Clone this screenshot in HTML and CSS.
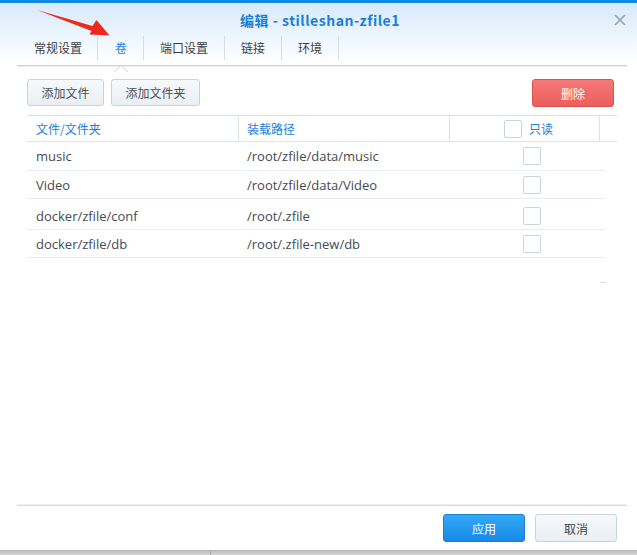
FILE: index.html
```html
<!DOCTYPE html>
<html lang="zh-CN">
<head>
<meta charset="utf-8">
<title>编辑 - stilleshan-zfile1</title>
<link rel="stylesheet" href="styles.css">
</head>
<body>
<div class="dialog">
  <div class="titlebar">
    <span class="title">编辑 - stilleshan-zfile1</span>
    <svg class="close" width="12" height="12" viewBox="0 0 12 12"><path d="M1 1L11 11M11 1L1 11" stroke="#9aa0a6" stroke-width="1.6" fill="none"/></svg>
  </div>
  <div class="tabs">
    <div class="tab">常规设置</div>
    <div class="tab active">卷<svg class="notch" width="14" height="7" viewBox="0 0 14 7"><polyline points="0,7 7,0.5 14,7" fill="#fff" stroke="#d2d2d2" stroke-width="1"/></svg></div>
    <div class="tab">端口设置</div>
    <div class="tab">链接</div>
    <div class="tab">环境</div>
  </div>
  <div class="content">
    <div class="toolbar">
      <button class="btn">添加文件</button>
      <button class="btn wide">添加文件夹</button>
      <button class="btn danger">删除</button>
    </div>
    <div class="grid">
      <div class="ghead">
        <div class="hc c1">文件/文件夹</div>
        <div class="hc c2">装载路径</div>
        <div class="hc c3"><span class="cb hcb"></span><span>只读</span></div>
        <div class="hc c4"></div>
      </div>
      <div class="grow r1"><div class="c1">music</div><div class="c2">/root/zfile/data/music</div><div class="c3"><span class="cb"></span></div></div>
      <div class="grow"><div class="c1">Video</div><div class="c2">/root/zfile/data/Video</div><div class="c3"><span class="cb"></span></div></div>
      <div class="grow r3"><div class="c1">docker/zfile/conf</div><div class="c2">/root/.zfile</div><div class="c3"><span class="cb"></span></div></div>
      <div class="grow"><div class="c1">docker/zfile/db</div><div class="c2">/root/.zfile-new/db</div><div class="c3"><span class="cb"></span></div></div>
      <div class="scrollmark"></div>
    </div>
  </div>
  <div class="footer">
    <button class="btn primary">应用</button>
    <button class="btn cancel">取消</button>
  </div>
  <svg class="arrow" width="120" height="45" viewBox="0 0 120 45"><polygon points="37,10 92.5,26 96.5,20 109.5,35.5 89.5,34.5 91.5,31" fill="#ee2a1c"/></svg>
</div>
<div class="below"><div class="below-left"></div><div class="below-right"></div></div>
</body>
</html>
```
FILE: styles.css
```css
html, body {
  margin: 0;
  padding: 0;
}
body {
  width: 637px;
  height: 555px;
  overflow: hidden;
  background: #d4d4d4;
  font-family: "Open Sans", "Noto Sans CJK SC", sans-serif;
  font-size: 12px;
  color: #444b52;
}
.dialog {
  position: relative;
  box-sizing: border-box;
  height: 550px;
  border-top: 3px solid #0f88e6;
  background: linear-gradient(to bottom, #d7eafa 0px, #eaf4fd 30px, #ffffff 60px);
  display: flex;
  flex-direction: column;
}
.titlebar {
  position: relative;
  height: 33px;
  display: flex;
  align-items: center;
  justify-content: center;
}
.title {
  font-family: "Noto Sans CJK SC", "Open Sans", sans-serif;
  font-size: 14px;
  font-weight: bold;
  color: #1a7fd6;
  letter-spacing: 0.5px;
  margin-left: 3px;
}
.close {
  position: absolute;
  right: 11px;
  top: 11px;
}
.tabs {
  position: relative;
  display: flex;
  height: 29px;
  margin: 0 10px 0 17px;
  padding-left: 1px;
  border-bottom: 1px solid #d3d3d3;
  box-shadow: 0 1px 0 #ececec;
}
.tab {
  position: relative;
  height: 24px;
  line-height: 24px;
  padding: 0 16px;
  border-right: 1px solid #d5dde5;
  font-family: "Noto Sans CJK SC", sans-serif;
  color: #3a3f45;
}
.tab:first-child {
  padding-left: 16px;
  padding-right: 15px;
}
.tab.active {
  color: #1a80d8;
  padding-left: 17px;
}
.notch {
  position: absolute;
  left: 50%;
  margin-left: -7px;
  bottom: -12px;
}
.content {
  padding: 13px 0 0 27px;
}
.toolbar {
  display: flex;
  height: 27px;
  width: 587px;
}
.btn {
  box-sizing: border-box;
  height: 27px;
  width: 77px;
  padding: 0;
  border: 1px solid #c7d2dc;
  border-radius: 3px;
  background: linear-gradient(to bottom, #f7f9fb, #e9eff4);
  font-family: "Noto Sans CJK SC", sans-serif;
  font-size: 12px;
  color: #4b5157;
}
.btn.wide {
  width: 89px;
  margin-left: 7px;
}
.btn.danger {
  margin-left: auto;
  width: 82px;
  height: 28px;
  border-color: #d9544f;
  background: linear-gradient(to bottom, #f87878, #ea5e5e);
  color: #ffffff;
}
.grid {
  margin-top: 9px;
  width: 590px;
}
.ghead {
  display: flex;
  height: 27px;
  box-sizing: border-box;
  border-top: 1px solid #d7e0e8;
  border-bottom: 1px solid #dde5ec;
  color: #1a80d8;
  font-family: "Noto Sans CJK SC", sans-serif;
}
.hc {
  display: flex;
  align-items: center;
  box-sizing: border-box;
  border-right: 1px solid #dbe3ea;
}
.ghead .c1 { width: 212px; padding-left: 9px; }
.ghead .c2 { width: 211px; padding-left: 8px; }
.ghead .c3 { width: 150px; padding-left: 54px; }
.ghead .c4 { width: 17px; border-right: none; }
.cb {
  display: inline-block;
  box-sizing: border-box;
  width: 18px;
  height: 18px;
  border: 1px solid #c9d3dd;
  border-radius: 2px;
  background: #fff;
}
.hcb {
  margin-right: 7px;
}
.grow {
  display: flex;
  align-items: center;
  width: 578px;
  height: 28px;
  box-sizing: border-box;
  border-bottom: 1px solid #e6ecf1;
  font-size: 13px;
}
.grow.r1 { height: 29px; }
.grow.r3 { height: 31px; padding-top: 3px; }
.grow .c1 { width: 212px; padding-left: 9px; box-sizing: border-box; }
.grow .c2 { width: 211px; padding-left: 8px; box-sizing: border-box; }
.grow .c3 { width: 155px; padding-left: 73px; box-sizing: border-box; display: flex; align-items: center; }
.scrollmark {
  margin: 24px 0 0 573px;
  width: 6px;
  height: 1px;
  background: #d6e0ea;
}
.footer {
  margin: auto 10px 0 17px;
  border-top: 1px solid #dcdcdc;
  box-shadow: 0 -1px 0 #efefef;
  padding: 8px 10px 8px 0;
  display: flex;
  justify-content: flex-end;
}
.btn.primary {
  width: 82px;
  height: 28px;
  border-color: #1a7fd2;
  background: linear-gradient(to bottom, #33a9f8, #178ae6);
  color: #ffffff;
}
.btn.cancel {
  width: 82px;
  height: 28px;
  margin-left: 10px;
  color: #3f454b;
}
.arrow {
  position: absolute;
  left: 0;
  top: -3px;
}
.below {
  display: flex;
  height: 5px;
  background: linear-gradient(to bottom, #b9b9b9, #d6d6d6);
}
.below-left {
  width: 210px;
  border-right: 1px solid #a9a9a9;
}
```
